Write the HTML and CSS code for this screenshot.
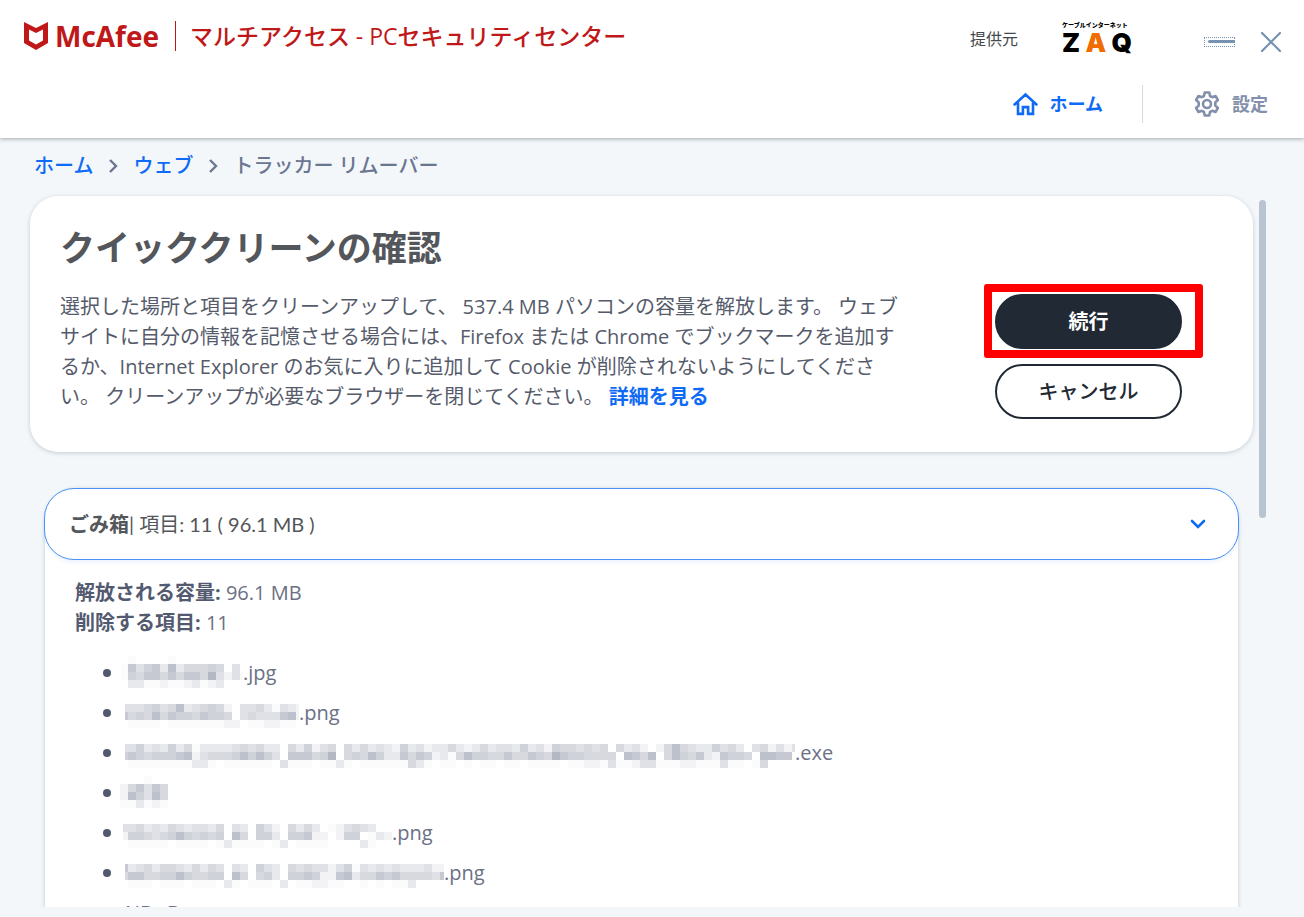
FILE: index.html
```html
<!DOCTYPE html>
<html lang="ja">
<head>
<meta charset="utf-8">
<meta name="viewport" content="width=device-width, initial-scale=1">
<title>マルチアクセス - PCセキュリティセンター</title>
<link rel="stylesheet" href="styles.css">
</head>
<body>
<header class="app-header">
  <div class="title-bar">
    <div class="brand">
      <svg class="brand-shield" viewBox="0 0 24 28" aria-hidden="true"><path d="M0 0 12 6 24 0V21L12 28 0 21ZM5 7.500V18.500L12 22.500 19 18.500V7.500L12 11Z" fill="#c01818" fill-rule="evenodd"/></svg>
      <span class="brand-name">McAfee</span>
      <h1 class="product-name">マルチアクセス - PCセキュリティセンター</h1>
    </div>
    <div class="provider">
      <span>提供元</span>
      <div class="zaq">
        <span class="zaq-caption">ケーブルインターネット</span>
        <span class="zaq-letters"><b>Z</b><b class="zaq-a">A</b><b>Q</b></span>
      </div>
    </div>
    <div class="window-controls">
      <button class="minimize" type="button" aria-label="最小化"><svg viewBox="0 0 31 10" aria-hidden="true"><path d="M5.500 4.500H29.500" stroke="#7592b3" stroke-width="3" stroke-linecap="round"/></svg></button>
      <button class="close" type="button" aria-label="閉じる"><svg viewBox="0 0 22 22" aria-hidden="true"><path d="M2 2 20 20M20 2 2 20" stroke="#7592b3" stroke-width="2.200" stroke-linecap="round"/></svg></button>
    </div>
  </div>
  <nav class="main-nav" aria-label="メイン">
    <a class="nav-link nav-home" href="#home"><svg class="home-icon" viewBox="0 0 24 24" aria-hidden="true"><path d="M1.500 12 12 2.500 22.500 12M4.800 10V21H9.500V14.500H14.500V21H19.200V10" fill="none" stroke="currentColor" stroke-width="2.500" stroke-linecap="round" stroke-linejoin="miter"/></svg>ホーム</a>
    <a class="nav-link nav-settings" href="#settings"><svg class="gear-icon" viewBox="0 0 26 26" aria-hidden="true"><path d="M10.700 1.500H15.300L16 5 18.200 6.200 21.500 5 23.900 9 21.300 11.400V14.600L23.900 17 21.500 21 18.200 19.800 16 21 15.300 24.500H10.700L10 21 7.800 19.800 4.500 21 2.100 17 4.700 14.600V11.400L2.100 9 4.500 5 7.800 6.200 10 5Z" fill="none" stroke="currentColor" stroke-width="2.600" stroke-linejoin="round"/><circle cx="13" cy="13" r="4" fill="none" stroke="currentColor" stroke-width="2.600"/></svg>設定</a>
  </nav>
</header>

<main class="page">
  <nav class="breadcrumb" aria-label="パンくずリスト">
    <a href="#home">ホーム</a>
    <svg class="crumb-sep" viewBox="0 0 10 16" aria-hidden="true"><path d="M2 2 8 8 2 14" fill="none" stroke="#6b7690" stroke-width="2.400"/></svg>
    <a href="#web">ウェブ</a>
    <svg class="crumb-sep" viewBox="0 0 10 16" aria-hidden="true"><path d="M2 2 8 8 2 14" fill="none" stroke="#6b7690" stroke-width="2.400"/></svg>
    <span>トラッカー リムーバー</span>
  </nav>

  <div class="scroll-region">
    <div class="content">
      <section class="card">
        <h2 class="card-title">クイッククリーンの確認</h2>
        <div class="card-body">
          <p class="card-text">選択した場所と項目をクリーンアップして、 537.4 MB パソコンの容量を解放します。 ウェブサイトに自分の情報を記憶させる場合には、Firefox または Chrome でブックマークを追加するか、Internet Explorer のお気に入りに追加して Cookie が削除されないようにしてください。 クリーンアップが必要なブラウザーを閉じてください。 <a href="#details">詳細を見る</a></p>
          <div class="actions">
            <div class="highlighted"><button class="button button-primary" type="button">続行</button></div>
            <button class="button button-outline" type="button">キャンセル</button>
          </div>
        </div>
      </section>

      <section class="accordion">
        <button class="accordion-head" type="button" aria-expanded="true" aria-controls="recycle-bin">
          <span><b>ごみ箱</b>| 項目: 11 ( 96.1 MB )</span>
          <svg class="chevron" viewBox="0 0 16 10" aria-hidden="true"><path d="M2 2 8 8 14 2" fill="none" stroke="#0f6bf5" stroke-width="2.600" stroke-linecap="round"/></svg>
        </button>
        <div class="accordion-panel" id="recycle-bin">
          <p class="summary"><b>解放される容量:</b> 96.1 MB<br><b>削除する項目:</b> 11</p>
          <ul class="file-list">
            <li><svg class="mask" data-width="123" data-start="1" data-rows="0100001|174673835556504|1657757577594241|0331121123123"></svg>.jpg</li>
            <li><svg class="mask" data-width="179" data-start="5" data-rows="|44456458345652044531432|75658576657665045444782|01111011111112201122110"></svg>.png</li>
            <li><svg class="mask" data-width="675" data-start="5" data-rows="|4463436351333345453305362450535343263423353235344363426554545053420258543364530452424|676566678245556868640777569056586337576231586655755765976655550875805865732766508877|011111111331011111104111011310111111531011010110110111101122141124411122111411015"></svg>.exe</li>
            <li><svg class="mask" data-width="48" data-start="0" data-rows="0001|257475|286485|113121"></svg></li>
            <li><svg class="mask" data-width="272" data-start="3" data-rows="|44534354344350430642053530124543|266545686565608506630667220266013200|0111110111101311110130111100003100"></svg>.png</li>
            <li><svg class="mask" data-width="324" data-start="5" data-rows="|73453554353540430643054544246143434333422|57755668655660850563066762278355767555547|01110111011103101110301122110010101130"></svg>.png</li>
            <li class="plain">NB_ B</li>
          </ul>
        </div>
      </section>
    </div>
    <div class="scroll-track" aria-hidden="true"><div class="scroll-thumb"></div></div>
  </div>
</main>
<script src="mask.js"></script>
</body>
</html>
```

FILE: styles.css
```css
* {
  box-sizing: border-box;
}

body {
  margin: 0;
  height: 100vh;
  display: flex;
  flex-direction: column;
  overflow: hidden;
  background: #f3f7fa;
  color: #53565a;
  font-family: "Open Sans", "Noto Sans CJK JP", sans-serif;
  font-size: 20px;
  line-height: 30px;
}

h1, h2, p, ul {
  margin: 0;
  padding: 0;
}

button {
  padding: 0;
  font: inherit;
  cursor: pointer;
}

a {
  color: #0f6bf5;
  text-decoration: none;
}

svg {
  display: block;
  flex: none;
}

/* Header */
.app-header {
  position: relative;
  padding: 0 22px 8px 24px;
  background: #fff;
  box-shadow: 0 1px 4px rgba(40, 50, 60, 0.4);
}

.title-bar {
  display: flex;
  align-items: center;
  height: 78px;
}

.brand {
  display: flex;
  align-items: center;
  align-self: flex-start;
  height: 71px;
  margin-right: auto;
  color: #c01818;
}

.brand-shield {
  width: 24px;
  height: 28px;
}

.brand-name {
  margin: 0 16px 0 7px;
  font-size: 28px;
  font-weight: 700;
}

.product-name {
  padding-left: 14px;
  border-left: 1px solid currentColor;
  font-size: 23px;
  font-weight: 500;
  white-space: nowrap;
}

.provider {
  display: flex;
  align-items: center;
  gap: 44px;
  font-size: 16px;
  color: #45484c;
}

.zaq {
  display: flex;
  flex-direction: column;
  width: 70px;
  color: #000;
}

.zaq-caption {
  font-size: 6px;
  font-weight: 900;
  line-height: 8px;
  white-space: nowrap;
}

.zaq-letters {
  display: flex;
  justify-content: space-between;
  font-family: Inter, sans-serif;
  font-size: 26px;
  line-height: 28px;
}

.zaq-letters b {
  font-weight: 900;
}

.zaq-letters .zaq-a {
  color: #f06c00;
}

.window-controls {
  display: flex;
  align-items: center;
  gap: 25px;
  padding-top: 5px;
  margin-left: 72px;
}

.window-controls button {
  border: 0;
  background: none;
}

.window-controls .minimize {
  width: 31px;
  height: 10px;
  outline: 1px dotted #7592b3;
  outline-offset: -1px;
}

.close svg {
  width: 22px;
  height: 22px;
}

.main-nav {
  display: flex;
  justify-content: flex-end;
  align-items: center;
  height: 52px;
  padding-right: 14px;
}

.nav-link {
  display: flex;
  align-items: center;
  height: 38px;
  font-size: 18px;
  font-weight: 700;
}

.nav-home {
  gap: 12px;
  padding-right: 39px;
  border-right: 1px solid #d3dae3;
}

.nav-settings {
  gap: 12px;
  padding-left: 51px;
  color: #8390ab;
}

.home-icon {
  width: 25px;
  height: 25px;
}

.gear-icon {
  width: 26px;
  height: 26px;
}

/* Page */
.page {
  flex: 1;
  min-height: 0;
  display: flex;
  flex-direction: column;
  padding-bottom: 10px;
}

.breadcrumb {
  display: flex;
  align-items: center;
  gap: 15px;
  height: 54px;
  padding: 2px 34px 0;
  font-weight: 500;
  color: #6b7690;
}

.crumb-sep {
  width: 10px;
  height: 16px;
}

.scroll-region {
  flex: 1;
  min-height: 0;
  display: flex;
  gap: 6px;
  padding: 4px 38px 0 30px;
  overflow: hidden;
}

.content {
  flex: 1;
  min-width: 0;
}

.scroll-track {
  width: 7px;
  padding-top: 4px;
}

.scroll-thumb {
  height: 45%;
  border-radius: 4px;
  background: #b9c4d1;
}

.card {
  padding: 30px 71px 33px 30px;
  border-radius: 28px;
  background: #fff;
  box-shadow: 0 1px 4px rgba(60, 75, 95, 0.25);
}

.card-title {
  margin-bottom: 22px;
  font-size: 35px;
  line-height: 44px;
}

.card-body {
  display: flex;
  gap: 86px;
}

.card-text {
  flex: 1;
  color: #565b6b;
}

.card-text a {
  font-weight: 700;
}

.actions {
  display: flex;
  flex-direction: column;
  gap: 15px;
  width: 187px;
  padding-top: 2px;
}

.button {
  display: block;
  width: 100%;
  height: 55px;
  border: 2px solid #212934;
  border-radius: 28px;
}

.button-primary {
  background: #212934;
  color: #fff;
  font-weight: 700;
}

.button-outline {
  background: #fff;
  color: #212934;
  font-weight: 500;
}

.highlighted {
  position: relative;
}

/* Callout frame drawn over the primary action */
.highlighted::after {
  content: "";
  position: absolute;
  inset: -10px -21px -9px -11px;
  border: 8px solid #ff0000;
  border-radius: 3px;
  pointer-events: none;
}

/* Accordion */
.accordion {
  min-height: 100%;
  margin: 36px 15px 0;
  border-radius: 35px 35px 0 0;
  background: #fff;
  box-shadow: 0 1px 4px rgba(60, 75, 95, 0.25);
}

.accordion-head {
  display: flex;
  justify-content: space-between;
  align-items: center;
  width: calc(100% + 2px);
  height: 72px;
  margin: 0 -1px;
  padding: 0 32px 0 24px;
  border: 1px solid #4a90f7;
  border-radius: 30px;
  background: #fff;
  box-shadow: 0 2px 4px rgba(74, 144, 247, 0.12);
  color: #53565a;
  font-family: Lato, "Noto Sans CJK JP", sans-serif;
}

.chevron {
  width: 16px;
  height: 10px;
}

.accordion-panel {
  padding: 18px 30px 40px;
  color: #6b7085;
}

.summary b {
  color: #535a70;
}

.file-list {
  padding-top: 15px;
  list-style: none;
}

.file-list li {
  display: flex;
  align-items: center;
  height: 40px;
  padding-left: 28px;
}

.file-list li::before {
  content: "";
  flex: none;
  width: 8px;
  height: 8px;
  margin-right: 9px;
  border-radius: 50%;
  background: #535a70;
}

.file-list .plain::before {
  margin-right: 14px;
}

.mask {
  height: 32px;
  align-self: flex-start;
  margin-top: 3px;
}
```

FILE: mask.js
```js
// Draws a pixelated block over each hidden file name.
// data-rows holds one string per pixel row; each digit is a shade from 0 to 9.
const CELL = 8;
const NS = "http://www.w3.org/2000/svg";
const OPACITY = [0, 0.03, 0.09, 0.17, 0.23, 0.29, 0.35, 0.41, 0.48, 0.55];

document.querySelectorAll(".mask").forEach((svg) => {
  const width = Number(svg.dataset.width);
  const start = Number(svg.dataset.start);
  svg.setAttribute("width", width);
  svg.setAttribute("height", CELL * 4);
  svg.setAttribute("aria-hidden", "true");
  svg.dataset.rows.split("|").forEach((row, y) => {
    [...row].forEach((shade, x) => {
      if (shade === "0") return;
      const left = Math.max(start, x * CELL);
      const rect = document.createElementNS(NS, "rect");
      rect.setAttribute("x", left);
      rect.setAttribute("y", y * CELL);
      rect.setAttribute("width", (x + 1) * CELL - left);
      rect.setAttribute("height", CELL);
      rect.setAttribute("fill", "#767d92");
      rect.setAttribute("fill-opacity", OPACITY[Number(shade)]);
      rect.setAttribute("shape-rendering", "crispEdges");
      svg.appendChild(rect);
    });
  });
});
```
